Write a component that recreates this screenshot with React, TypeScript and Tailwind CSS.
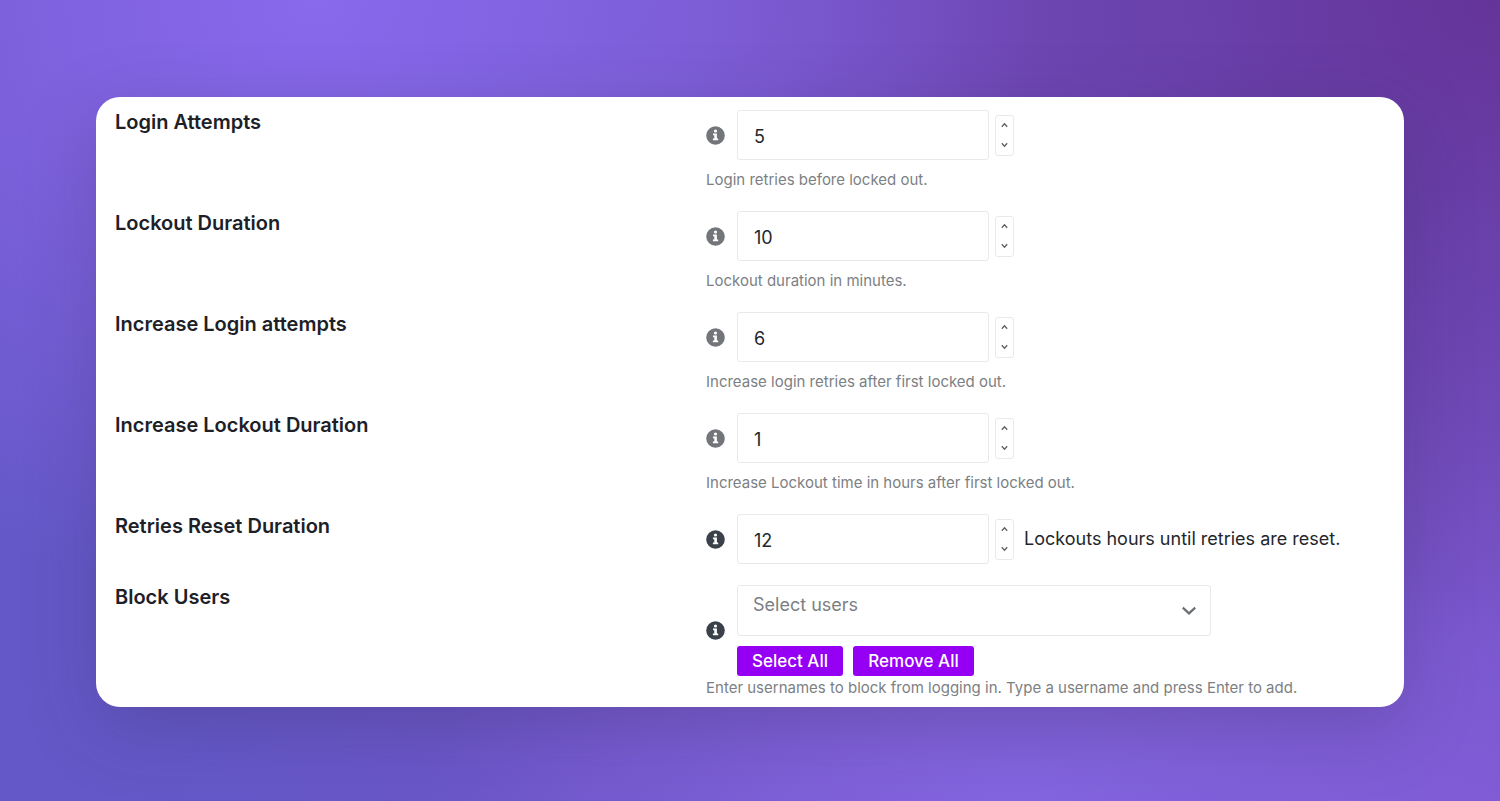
import { useState, type ReactNode } from "react";

/* ─── Data ─────────────────────────────────────────────── */
type NumberSetting = {
  id: string;
  label: string;
  value: number;
  help?: string;
  suffix?: string;
};

const SETTINGS: NumberSetting[] = [
  { id: "login-attempts", label: "Login Attempts", value: 5, help: "Login retries before locked out." },
  { id: "lockout-duration", label: "Lockout Duration", value: 10, help: "Lockout duration in minutes." },
  { id: "increase-attempts", label: "Increase Login attempts", value: 6, help: "Increase login retries after first locked out." },
  { id: "increase-lockout", label: "Increase Lockout Duration", value: 1, help: "Increase Lockout time in hours after first locked out." },
  { id: "retries-reset", label: "Retries Reset Duration", value: 12, suffix: "Lockouts hours until retries are reset." },
];

/* ─── Icons ────────────────────────────────────────────── */
function InfoIcon({ className }: { className: string }) {
  return (
    <svg width="19" height="19" viewBox="0 0 19 19" className={`mr-3 shrink-0 ${className}`}>
      <circle cx="9.5" cy="9.5" r="9.3" fill="currentColor" />
      <circle cx="9.5" cy="5" r="1.6" fill="#fff" />
      <path d="M7 7.6h3.9v5h1.3v1.7H6.9v-1.7h1.4V9.2H7z" fill="#fff" />
    </svg>
  );
}

function StepIcon({ up }: { up?: boolean }) {
  return (
    <svg width="8" height="6" viewBox="0 0 8 6" fill="none" stroke="#5c6066" strokeWidth="1.3">
      <path d={up ? "M.8 4.8 3.5 1.8l2.7 3" : "M.8 1.2 3.5 4.2l2.7-3"} />
    </svg>
  );
}

function ChevronIcon() {
  return (
    <svg
      width="16"
      height="10"
      viewBox="0 0 16 10"
      fill="none"
      stroke="#6b6e73"
      strokeWidth="2.2"
      className="pointer-events-none absolute right-3.5 top-[21px]"
    >
      <path d="M1.8 1.6 8 7.4l6.2-5.8" />
    </svg>
  );
}

/* ─── Row ──────────────────────────────────────────────── */
function Row({ id, label, help, tight, children }: {
  id: string;
  label: string;
  help?: string;
  tight?: boolean;
  children: ReactNode;
}) {
  return (
    <div className="grid grid-cols-[591fr_679fr]">
      <label htmlFor={id} className="self-start text-[20px] leading-6 font-semibold text-[#1d2127]">
        {label}
      </label>
      <div>
        <div className="flex items-center">
          <InfoIcon className={help && !tight ? "text-[#72757a]" : "text-[#3a4149]"} />
          {children}
        </div>
        {help && (
          <p className={`text-[15px] leading-5 text-[#7c7f83] ${tight ? "mt-0.5" : "mt-2.5"}`}>{help}</p>
        )}
      </div>
    </div>
  );
}

/* ─── Number field ─────────────────────────────────────── */
function NumberField({ setting }: { setting: NumberSetting }) {
  const [value, setValue] = useState(setting.value);

  return (
    <>
      <input
        id={setting.id}
        type="number"
        min={0}
        value={value}
        onChange={(e) => setValue(Number(e.target.value))}
        className="h-[50px] w-[252px] appearance-none rounded-[3px] border border-[#e9e9eb] bg-white px-4 pt-0.5 text-[18px] text-[#23272d] outline-none [-moz-appearance:textfield] [&::-webkit-inner-spin-button]:appearance-none"
      />
      <div className="ml-1.5 flex h-[41px] w-[19px] shrink-0 flex-col rounded-[3px] border border-[#e9e9eb]">
        <button
          type="button"
          aria-label={`Increase ${setting.label}`}
          onClick={() => setValue(value + 1)}
          className="flex flex-1 items-center justify-center"
        >
          <StepIcon up />
        </button>
        <button
          type="button"
          aria-label={`Decrease ${setting.label}`}
          onClick={() => setValue(Math.max(0, value - 1))}
          className="flex flex-1 items-center justify-center"
        >
          <StepIcon />
        </button>
      </div>
      {setting.suffix && (
        <span className="ml-2.5 text-[18px] leading-6 text-[#23272d]">{setting.suffix}</span>
      )}
    </>
  );
}

/* ─── Page ─────────────────────────────────────────────── */
export default function App() {
  return (
    <div className="min-h-screen bg-[#7454c6] bg-[radial-gradient(ellipse_48%_75%_at_21%_0%,#8969ec_0%,#8969ec00_100%),radial-gradient(ellipse_40%_45%_at_68%_103%,#8566e2_0%,#8566e200_100%),radial-gradient(ellipse_55%_80%_at_100%_0%,#643499_0%,#64349900_100%),radial-gradient(ellipse_60%_150%_at_0%_95%,#6458c8_0%,#6458c8_20%,#6458c800_100%),radial-gradient(ellipse_30%_50%_at_100%_100%,#7e59d2_0%,#7e59d200_100%)] px-24 pt-[97px] pb-12 font-['Inter','Liberation_Sans',sans-serif]">
      <form
        onSubmit={(e) => e.preventDefault()}
        className="flex flex-col gap-[21px] rounded-3xl bg-white px-[19px] pt-[13px] pb-[9px] shadow-[0_20px_70px_rgba(50,40,80,0.25)]"
      >
        {SETTINGS.map((s) => (
          <Row key={s.id} id={s.id} label={s.label} help={s.help}>
            <NumberField setting={s} />
          </Row>
        ))}

        <Row
          id="block-users"
          label="Block Users"
          help="Enter usernames to block from logging in. Type a username and press Enter to add."
          tight
        >
          <div>
            <div className="relative w-[474px]">
              <select
                id="block-users"
                defaultValue=""
                className="block h-[51px] w-full appearance-none rounded-[3px] border border-[#e9e9eb] bg-white pr-10 pb-3 pl-[15px] text-[18px] text-[#7c7f83] outline-none"
              >
                <option value="">Select users</option>
              </select>
              <ChevronIcon />
            </div>
            <div className="mt-2.5 flex gap-2.5 text-[17px] leading-[30px] font-medium text-white">
              <button type="button" className="w-[106px] rounded-[3px] bg-[#9500f5]">Select All</button>
              <button type="button" className="w-[121px] rounded-[3px] bg-[#9500f5]">Remove All</button>
            </div>
          </div>
        </Row>
      </form>
    </div>
  );
}
